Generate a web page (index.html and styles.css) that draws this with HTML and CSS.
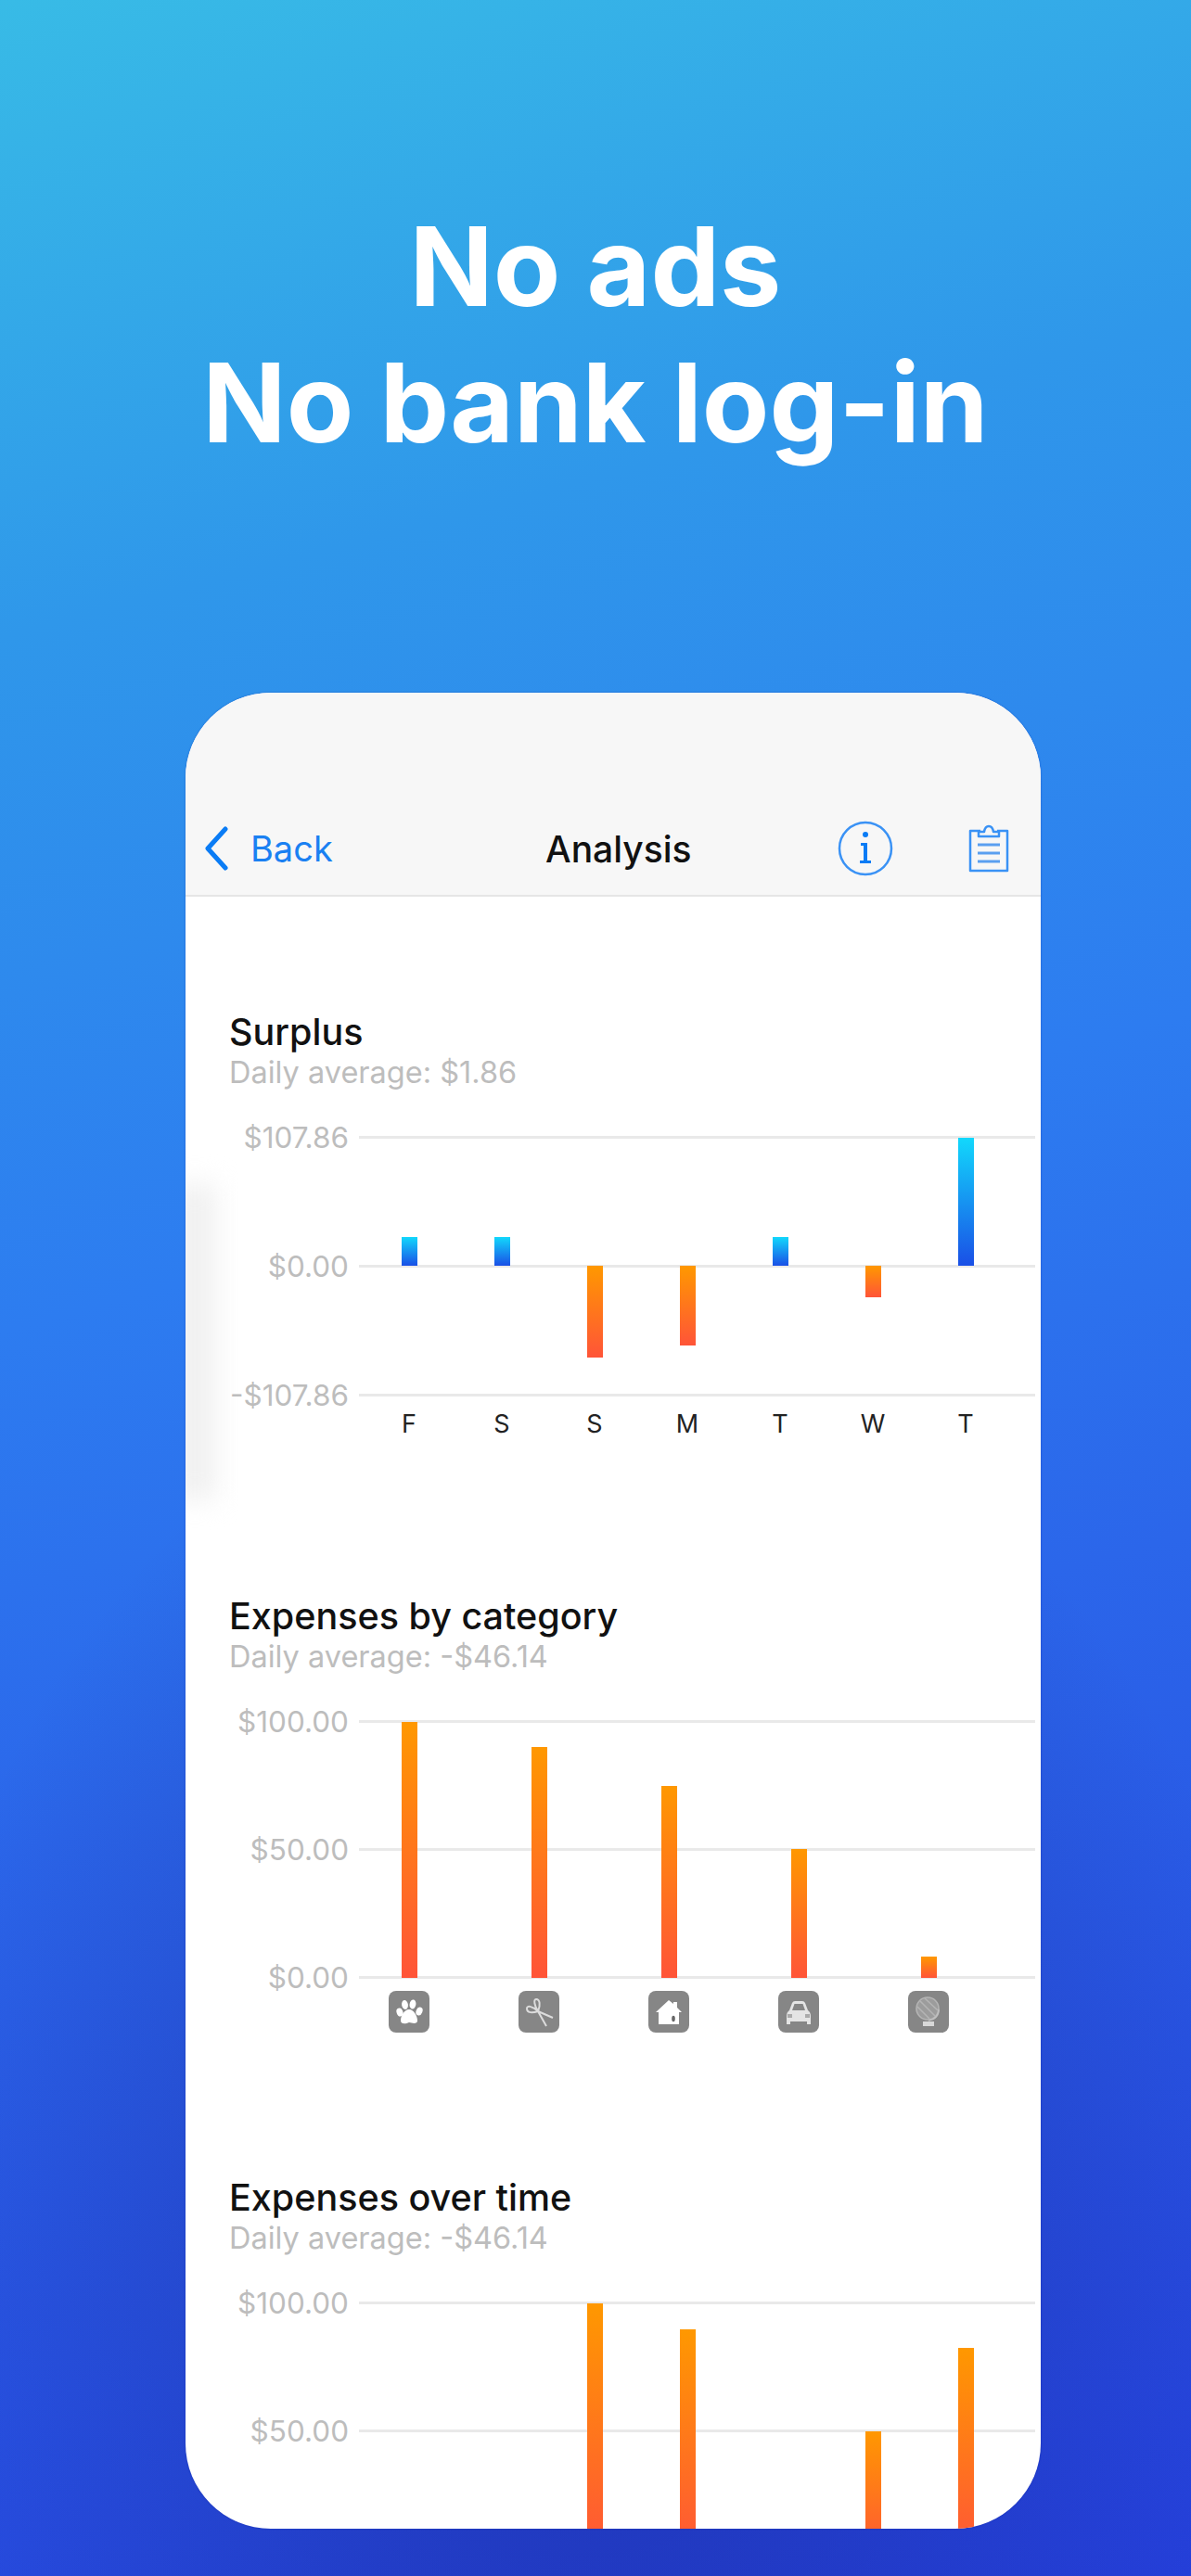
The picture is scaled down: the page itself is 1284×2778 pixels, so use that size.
FILE: index.html
```html
<!DOCTYPE html>
<html lang="en">
<head>
<meta charset="UTF-8">
<title>Analysis</title>
<link rel="stylesheet" href="styles.css">
</head>
<body>
<div class="page">
  <h1 class="headline">No ads<br>No bank log-in</h1>

  <div class="card">
    <div class="nav">
      <div class="back">
        <svg class="chevron" width="27" height="48" viewBox="0 0 27 48"><path d="M23 3 L4 24 L23 45" fill="none" stroke="#0a7cf5" stroke-width="5" stroke-linecap="round" stroke-linejoin="round"/></svg>
        <span>Back</span>
      </div>
      <div class="nav-title">Analysis</div>
      <svg class="ico-info" width="60" height="60" viewBox="0 0 60 60">
        <circle cx="30" cy="30" r="28" fill="none" stroke="#3a92f5" stroke-width="2.5"/>
        <circle cx="30" cy="15" r="3" fill="#0a7cf5"/>
        <path d="M25 24 H32 V43 H36 V46 H24 V43 H28 V27 H25 Z" fill="#0a7cf5"/>
      </svg>
      <svg class="ico-clip" width="44" height="52" viewBox="0 0 44 52">
        <path d="M13 7 H2 V50 H42 V7 H31" fill="none" stroke="#3a92f5" stroke-width="2.5" stroke-linejoin="round"/>
        <path d="M11 13 V8 H17 Q18 2 22 2 Q26 2 27 8 H33 V13 Z" fill="none" stroke="#3a92f5" stroke-width="2.5" stroke-linejoin="round"/>
        <path d="M10 22 H34 M10 31 H34 M10 40 H34" stroke="#5a9ff0" stroke-width="3"/>
      </svg>
    </div>
    <div class="edge-shade"></div>

    <div class="chart chart-surplus">
      <div class="chart-title">Surplus</div>
      <div class="chart-sub">Daily average: $1.86</div>
      <div class="plot plot-a">
        <div class="grid-row"><span class="y-label">$107.86</span><span class="grid-line"></span></div>
        <div class="grid-row"><span class="y-label">$0.00</span><span class="grid-line"></span></div>
        <div class="grid-row"><span class="y-label">-$107.86</span><span class="grid-line"></span></div>
        <div class="bars">
          <div class="bars-up days">
            <div class="slot"><i class="bar blue" style="height:31px"></i></div>
            <div class="slot"><i class="bar blue" style="height:31px"></i></div>
            <div class="slot"></div>
            <div class="slot"></div>
            <div class="slot"><i class="bar blue" style="height:31px"></i></div>
            <div class="slot"></div>
            <div class="slot"><i class="bar blue" style="height:138px"></i></div>
          </div>
          <div class="bars-down days">
            <div class="slot"></div>
            <div class="slot"></div>
            <div class="slot"><i class="bar orange" style="height:99px"></i></div>
            <div class="slot"><i class="bar orange" style="height:86px"></i></div>
            <div class="slot"></div>
            <div class="slot"><i class="bar orange" style="height:34px"></i></div>
            <div class="slot"></div>
          </div>
        </div>
      </div>
      <div class="x-labels days">
        <span>F</span><span>S</span><span>S</span><span>M</span><span>T</span><span>W</span><span>T</span>
      </div>
    </div>

    <div class="chart chart-cat">
      <div class="chart-title">Expenses by category</div>
      <div class="chart-sub">Daily average: -$46.14</div>
      <div class="plot plot-b">
        <div class="grid-row"><span class="y-label">$100.00</span><span class="grid-line"></span></div>
        <div class="grid-row"><span class="y-label">$50.00</span><span class="grid-line"></span></div>
        <div class="grid-row"><span class="y-label">$0.00</span><span class="grid-line"></span></div>
        <div class="bars bars-cat">
          <div class="bars-up cats">
            <div class="slot"><i class="bar orange" style="height:276px"></i></div>
            <div class="slot"><i class="bar orange" style="height:249px"></i></div>
            <div class="slot"><i class="bar orange" style="height:207px"></i></div>
            <div class="slot"><i class="bar orange" style="height:139px"></i></div>
            <div class="slot"><i class="bar orange" style="height:23px"></i></div>
          </div>
        </div>
      </div>
      <div class="cat-icons cats">
        <div class="slot"><div class="cat-ico">
          <svg width="44" height="45" viewBox="0 0 44 45" fill="#fff">
            <ellipse cx="12" cy="23" rx="3.4" ry="4.6" transform="rotate(-20 12 23)"/>
            <ellipse cx="17.5" cy="15" rx="3.4" ry="5" transform="rotate(-8 17.5 15)"/>
            <ellipse cx="26" cy="14.5" rx="3.4" ry="5" transform="rotate(10 26 14.5)"/>
            <ellipse cx="33" cy="22" rx="3.4" ry="4.6" transform="rotate(22 33 22)"/>
            <path d="M22 20 C27 20 31 27 31 32 C31 36 26 35 22 34 C18 36 13 36 13 32 C13 27 17 20 22 20 Z"/>
          </svg>
        </div></div>
        <div class="slot"><div class="cat-ico">
          <svg width="44" height="45" viewBox="0 0 44 45" fill="none" stroke="#dcdcdc" stroke-width="2">
            <path d="M21 22 C17 16 16 9 19 9 C23 9 24 15 21 22 C15 24 9 24 9 19 C9 15 16 17 21 22 Z"/>
            <path d="M21 22 L30 38 M21 22 L37 29"/>
          </svg>
        </div></div>
        <div class="slot"><div class="cat-ico">
          <svg width="44" height="45" viewBox="0 0 44 45">
            <path d="M22 10 L27 14 V12 H31 V18 L36 23 H33 V36 H11 V23 H8 Z" fill="#fff"/>
            <ellipse cx="27" cy="30" rx="1.8" ry="3.2" fill="#666"/>
          </svg>
        </div></div>
        <div class="slot"><div class="cat-ico">
          <svg width="44" height="45" viewBox="0 0 44 45">
            <path d="M12 21 L15 13 Q16 11 18 11 H26 Q28 11 29 13 L32 21 Q35 23 35 27 V36 H31 V33 H13 V36 H9 V27 Q9 23 12 21 Z" fill="#e4e4e4"/>
            <path d="M15 21 L17.5 14 H26.5 L29 21 Z" fill="#868686"/>
            <path d="M10 25 H15 V29 H10 Z M29 25 H34 V29 H29 Z" fill="#aaa"/>
          </svg>
        </div></div>
        <div class="slot"><div class="cat-ico">
          <svg width="44" height="45" viewBox="0 0 44 45" fill="none" stroke="#b4b4b4" stroke-width="1.6">
            <circle cx="21" cy="19" r="12" fill="#9c9c9c"/>
            <path d="M13 11 L29 27 M18 8 L32 21 M10 17 L23 30"/>
            <path d="M33 20 Q33 30 22 32" stroke="#c0c0c0"/>
            <path d="M16 33 H28 V38 H16 Z" fill="#d8d8d8" stroke="none"/>
          </svg>
        </div></div>
      </div>
    </div>

    <div class="chart chart-time">
      <div class="chart-title">Expenses over time</div>
      <div class="chart-sub">Daily average: -$46.14</div>
      <div class="plot plot-c">
        <div class="grid-row"><span class="y-label">$100.00</span><span class="grid-line"></span></div>
        <div class="grid-row"><span class="y-label">$50.00</span><span class="grid-line"></span></div>
        <div class="grid-row"></div>
        <div class="bars">
          <div class="bars-up days">
            <div class="slot"></div>
            <div class="slot"></div>
            <div class="slot"><i class="bar orange" style="height:276px"></i></div>
            <div class="slot"><i class="bar orange" style="height:248px"></i></div>
            <div class="slot"></div>
            <div class="slot"><i class="bar orange" style="height:138px"></i></div>
            <div class="slot"><i class="bar orange" style="height:228px"></i></div>
          </div>
        </div>
      </div>
    </div>
  </div>
</div>
</body>
</html>
```

FILE: styles.css
```css
*{
  margin: 0;
  padding: 0;
  box-sizing: border-box;
}

body{
  font-family: Inter, "Liberation Sans", sans-serif;
}

.page{
  width: 1284px;
  height: 2778px;
  overflow: hidden;
  padding-top: 214px;
  background:
    radial-gradient(ellipse 760px 1000px at 640px 2450px, rgba(24,34,140,.5), rgba(24,34,140,0)),
    linear-gradient(165deg, #38bbe6 0%, #2f97ea 22%, #2d7cf0 46%, #2b66ea 64%, #2540dc 100%);
}

.headline{
  height: 533px;
  color: #fff;
  font-size: 118.5px;
  line-height: 147px;
  font-weight: 700;
  text-align: center;
}

.card{
  position: relative;
  width: 922px;
  height: 1980px;
  margin-left: 200px;
  background: #fff;
  border-radius: 92px;
  overflow: hidden;
  box-shadow: 0 0 2px rgba(10,30,150,.45);
}

.nav{
  display: flex;
  align-items: center;
  height: 220px;
  padding: 118px 34px 0 20px;
  background: #f7f7f7;
  border-bottom: 2px solid #e6e6e6;
}

.back{
  display: flex;
  align-items: center;
  gap: 23px;
  width: 368px;
  color: #1a80f2;
  font-size: 38px;
}

.nav-title{
  flex: 1;
  font-size: 39px;
  font-weight: 500;
  color: #111;
}

.ico-info{
  margin-right: 81px;
}

.edge-shade{
  position: absolute;
  left: -12px;
  top: 530px;
  width: 44px;
  height: 340px;
  background: #f0f0f0;
  filter: blur(14px);
}

.chart{
  position: relative;
  padding-left: 47px;
}

.chart-surplus{
  margin-top: 124px;
}

.chart-cat{
  margin-top: 165px;
}

.chart-time{
  margin-top: 156px;
}

.chart-title{
  height: 44px;
  line-height: 44px;
  font-size: 39.5px;
  font-weight: 500;
  color: #111;
}

.chart-sub{
  height: 44px;
  line-height: 44px;
  font-size: 32.5px;
  color: #bdbdbd;
}

.plot{
  position: relative;
  display: flex;
  flex-direction: column;
  justify-content: space-between;
  margin: 46px 0 0 -47px;
}

.plot-a{
  height: 281px;
}

.plot-b{
  height: 279px;
}

.plot-c{
  height: 279px;
}

.grid-row{
  display: flex;
  align-items: center;
  height: 3px;
}

.y-label{
  width: 176px;
  color: #bdbdbd;
  font-size: 31.5px;
  line-height: 40px;
  text-align: right;
}

.grid-line{
  width: 729px;
  height: 3px;
  margin-left: 11px;
  background: #e9e9e9;
}

.bars{
  position: absolute;
  left: 191px;
  top: 1.5px;
}

.bars-cat{
  left: 171px;
}

.days{
  display: grid;
  grid-template-columns: repeat(7, 100px);
}

.cats{
  display: grid;
  grid-template-columns: repeat(5, 140px);
}

.bars-up{
  height: 138px;
  align-items: end;
}

.bars-down{
  align-items: start;
}

.plot-b .bars-up,
.plot-c .bars-up{
  height: 276px;
}

.slot{
  display: flex;
  justify-content: center;
}

.plot-a .bars-up .slot,
.plot-b .bars-up .slot,
.plot-c .bars-up .slot{
  align-items: flex-end;
}

.bar{
  display: block;
  width: 17px;
}

.blue{
  background: linear-gradient(180deg, #12d8fc, #1a4fe6);
}

.orange{
  background: linear-gradient(180deg, #ff9800, #ff5438);
}

.x-labels{
  margin: 10px 0 0 144px;
  font-size: 27px;
  line-height: 40px;
  color: #222;
  text-align: center;
}

.cat-icons{
  margin: 13px 0 0 124px;
}

.cat-ico{
  width: 44px;
  height: 45px;
  background: #868686;
  border-radius: 8px;
}

.cat-ico svg{
  display: block;
}
```
